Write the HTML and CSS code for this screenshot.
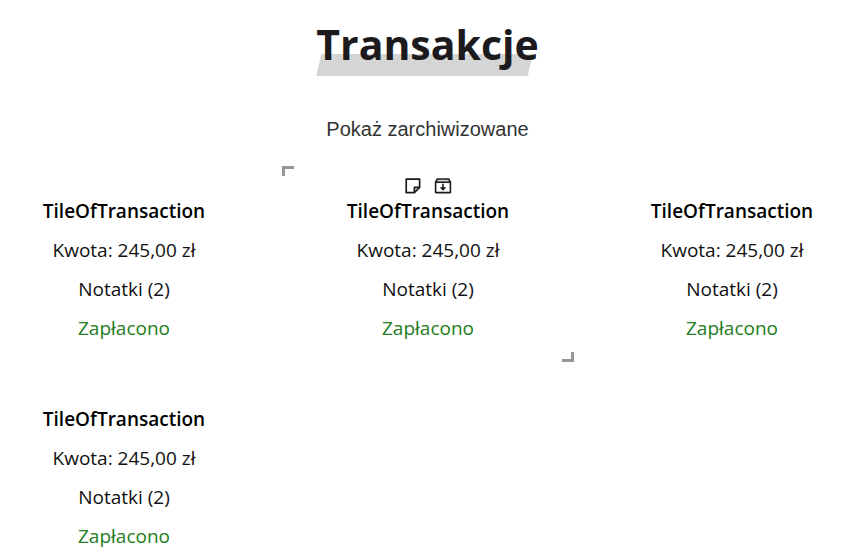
FILE: index.html
```html
<!DOCTYPE html>
<html lang="pl">
<head>
<meta charset="utf-8">
<meta name="viewport" content="width=device-width, initial-scale=1">
<title>Transakcje</title>
<link rel="stylesheet" href="styles.css">
</head>
<body>
<main class="page">
  <h1 class="heading"><span class="heading-text">Transakcje</span></h1>
  <button class="archive-toggle" type="button">Pokaż zarchiwizowane</button>
  <section class="tiles">
    <article class="tile">
      <div class="tools"></div>
      <h2 class="title">TileOfTransaction</h2>
      <p class="line">Kwota: 245,00 zł</p>
      <p class="line">Notatki (2)</p>
      <p class="line paid">Zapłacono</p>
    </article>
    <article class="tile active">
      <div class="tools">
        <button class="tool" type="button" aria-label="Notatka">
          <svg width="18" height="18" viewBox="0 0 18 18" fill="none" stroke="#1d1a1d" stroke-width="1.7" stroke-linejoin="round"><path d="M2.2 2.2H15.6V10.4L10.4 15.6H2.2Z"/><path d="M15.2 10.4H10.4V15.4"/></svg>
        </button>
        <button class="tool" type="button" aria-label="Archiwizuj">
          <svg width="18" height="18" viewBox="0 0 18 18" fill="none" stroke="#1d1a1d" stroke-width="1.6" stroke-linejoin="round"><path d="M1.6 5.2L3.4 2H14.6L16.4 5.2Z" fill="#d0d0d0"/><path d="M1.6 5.2V15.6H16.4V5.2"/><path d="M9 6.8V12.4M6.6 10.2L9 12.6L11.4 10.2"/></svg>
        </button>
      </div>
      <h2 class="title">TileOfTransaction</h2>
      <p class="line">Kwota: 245,00 zł</p>
      <p class="line">Notatki (2)</p>
      <p class="line paid">Zapłacono</p>
    </article>
    <article class="tile">
      <div class="tools"></div>
      <h2 class="title">TileOfTransaction</h2>
      <p class="line">Kwota: 245,00 zł</p>
      <p class="line">Notatki (2)</p>
      <p class="line paid">Zapłacono</p>
    </article>
    <article class="tile">
      <div class="tools"></div>
      <h2 class="title">TileOfTransaction</h2>
      <p class="line">Kwota: 245,00 zł</p>
      <p class="line">Notatki (2)</p>
      <p class="line paid">Zapłacono</p>
    </article>
  </section>
</main>
</body>
</html>
```
FILE: styles.css
```css
*, *::before, *::after { box-sizing: border-box; }
body {
  margin: 0;
  overflow: hidden;
  background: #fff;
  color: #111;
  font-family: "Segoe UI", "Open Sans", "Noto Sans", sans-serif;
}
.page {
  display: flex;
  flex-direction: column;
  align-items: center;
  padding-top: 12px;
}
.heading {
  margin: 0;
  padding-left: 4px;
  color: #1d1a1d;
  font-size: 41px;
  line-height: 64px;
}
.heading-text {
  position: relative;
  display: block;
}
.heading-text::before {
  content: "";
  position: absolute;
  z-index: -1;
  left: 0;
  right: 6px;
  bottom: 0;
  height: 22px;
  background: #d5d5d5;
  clip-path: polygon(5px 0, 100% 0, calc(100% - 5px) 100%, 0 100%);
}
button {
  border: 0;
  padding: 0;
  background: none;
  cursor: pointer;
}
.archive-toggle {
  margin: 40px 0 24px;
  padding-left: 4px;
  color: #333;
  font: 20px/26px "Liberation Sans", Arial, sans-serif;
}
.tiles {
  align-self: stretch;
  display: grid;
  grid-template-columns: repeat(3, 1fr);
  gap: 12px;
  margin: 0 -27px 0 -22px;
}
.tile {
  position: relative;
  padding: 11px 12px 19px;
  text-align: center;
}
.active::before,
.active::after {
  content: "";
  position: absolute;
  width: 12px;
  height: 10px;
  border: 0 solid #969696;
}
.active::before {
  top: 0;
  left: 0;
  border-width: 3px 0 0 3px;
}
.active::after {
  right: 0;
  bottom: 0;
  border-width: 0 3px 3px 0;
}
.tools {
  display: flex;
  justify-content: center;
  gap: 12px;
  height: 20px;
}
.tool {
  display: flex;
  width: 18px;
  height: 18px;
}
.title,
.line {
  margin: 0 0 10px;
  font-size: 19px;
  line-height: 29px;
}
.title {
  color: #000;
  font-weight: 600;
}
.line:last-child { margin-bottom: 0; }
.paid { color: #1e7d22; }
```
